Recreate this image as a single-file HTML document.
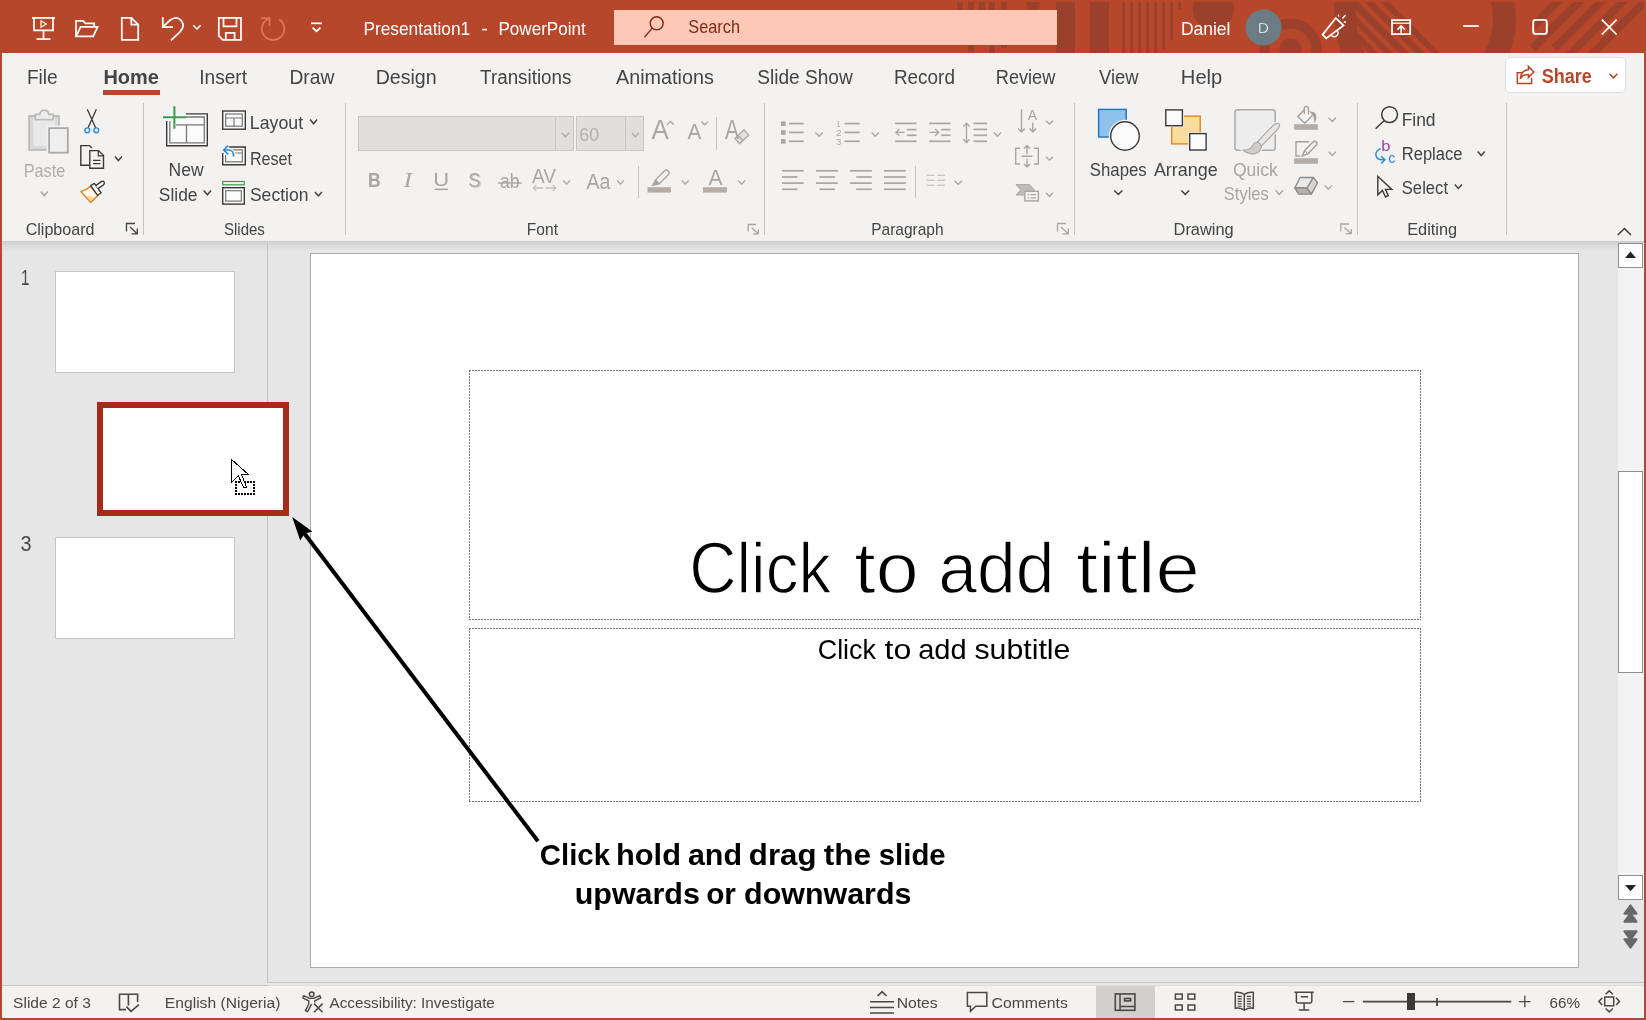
<!DOCTYPE html>
<html><head><meta charset="utf-8"><title>Presentation1 - PowerPoint</title>
<style>
html,body{margin:0;padding:0;background:#F3F2F1;overflow:hidden}
body{width:1646px;height:1020px;font-family:"Liberation Sans",sans-serif}
svg{display:block;position:absolute;left:0;top:0;will-change:transform}
text{font-family:"Liberation Sans",sans-serif;white-space:pre}
</style></head><body>
<svg width="1646" height="1020" viewBox="0 0 1646 1020">
<g shape-rendering="crispEdges">
<rect x="0" y="0" width="1646" height="1020" fill="#F3F2F1" />
<rect x="0" y="0" width="1646" height="53" fill="#B7472A" />
</g>
<defs><clipPath id="tbclip"><rect x="2" y="2" width="1642" height="51"/></clipPath><clipPath id="wedge"><path d="M1356 2 V10 Q1355.6 25 1358.5 38 Q1360.5 46 1365 53 H1480 V2 Z"/></clipPath><clipPath id="arcr"><rect x="1470" y="2" width="60" height="51"/></clipPath><linearGradient id="shadow" x1="0" y1="0" x2="0" y2="1"><stop offset="0" stop-color="#CDCDCD"/><stop offset="0.45" stop-color="#DADADA"/><stop offset="1" stop-color="#E6E6E6"/></linearGradient></defs>
<g clip-path="url(#tbclip)" fill="#9B402A">
<rect x="957" y="2" width="6" height="43"/>
<rect x="968" y="2" width="6" height="50"/>
<rect x="979" y="2" width="6" height="43"/>
<rect x="989" y="2" width="6" height="51"/>
<rect x="1001" y="2" width="6" height="46"/>
<polygon points="1026.6,2 1040,2 1034.5,44 1032,44"/>
<rect x="1056" y="2" width="19" height="51"/>
<rect x="1090" y="2" width="19" height="51"/>
<rect x="1122.2" y="2" width="3" height="51"/>
<rect x="1130.2" y="2" width="3" height="51"/>
<rect x="1138.2" y="2" width="3" height="51"/>
<rect x="1146.2" y="2" width="3" height="51"/>
<rect x="1154.2" y="2" width="3" height="51"/>
<rect x="1162.2" y="2" width="3" height="47.5"/>
<rect x="1170.2" y="2" width="3" height="37.5"/>
<rect x="1178.2" y="2" width="3" height="7"/>
<circle cx="1213.3" cy="8.8" r="20.8"/>
<circle cx="1290.5" cy="49.5" r="11"/>
<circle cx="1290.5" cy="49.5" r="26" fill="none" stroke="#9B402A" stroke-width="10"/>
<path d="M1333.8 2 H1357 L1356 4 V10 Q1355.6 25 1358.5 38 Q1360.5 46 1365 53 H1340.8 Q1333.5 28 1333.8 2Z"/>
<g clip-path="url(#wedge)">
<polygon points="1380.8,2 1388.8,2 1439.8,53 1431.8,53"/>
<polygon points="1364.9,2 1373.4,2 1424.4,53 1415.9,53"/>
<polygon points="1348,2 1358,2 1409,53 1399,53"/>
<polygon points="1333.5,2 1341.4,2 1392.4,53 1384.5,53"/>
<polygon points="1317.8,2 1327.2,2 1378.2,53 1368.8,53"/>
<polygon points="1303,2 1311.3,2 1362.3,53 1354,53"/>
</g>
<g clip-path="url(#arcr)"><circle cx="1428" cy="19" r="76.5" fill="none" stroke="#9B402A" stroke-width="23"/></g>
<line x1="1532.6" y1="26.7" x2="1569.2" y2="-10" stroke="#9B402A" stroke-width="7.8"/>
<line x1="1532.5" y1="48.4" x2="1590.9" y2="-10" stroke="#9B402A" stroke-width="7.8"/>
<line x1="1554.2" y1="48.4" x2="1612.7" y2="-10" stroke="#9B402A" stroke-width="7.8"/>
<line x1="1560" y1="64.4" x2="1634.4" y2="-10" stroke="#9B402A" stroke-width="7.8"/>
<line x1="1580" y1="66.1" x2="1656.1" y2="-10" stroke="#9B402A" stroke-width="7.8"/>
</g>
<g shape-rendering="crispEdges">
<rect x="0" y="0" width="2" height="1020" fill="#B7472A" />
<rect x="1644" y="0" width="2" height="1020" fill="#B7472A" />
<rect x="0" y="1018" width="1646" height="2" fill="#B7472A" />
</g>
<rect x="614" y="10" width="443" height="35" fill="#FDC9B6" shape-rendering="crispEdges"/>
<circle cx="656.7" cy="23.3" r="6.5" fill="none" stroke="#7E2B18" stroke-width="1.4"/><path d="M652.3 28.1 L644.4 37.3" stroke="#7E2B18" stroke-width="1.4" fill="none"/>
<circle cx="1263.5" cy="27.5" r="18" fill="#6C7C84"/>
<g fill="none" stroke="#FFFFFF" stroke-width="1.75">
<path d="M32 17.9 H55"/><path d="M34 18 V30.4 H53 V18"/><path d="M43.5 30.4 V39 M36.5 39.2 H50.5"/><path d="M41 20.8 L46.3 24 L41 27.2 Z" stroke-width="1.2"/>
<path d="M76 36.3 V20.8 H83 L85.5 23.3 H94.2 V26.8"/><path d="M76 36.3 L80.6 26.8 H97.6 L93.2 36.3 Z"/>
<path d="M121.8 17.8 H131.3 L138.2 24.7 V39.9 H121.8 Z"/><path d="M131.3 17.8 V24.7 H138.2"/>
<path d="M162.8 17.2 V27 H173"/><path d="M163.3 26.5 L170 20.3 Q176.5 15.5 181 20.3 Q185.8 26 180 31.8 L171 40.3" />
<path d="M193.3 25.3 L197 29 L200.7 25.3" stroke-width="1.5"/>
<path d="M218.8 17.8 H241 V39.9 H222.8 L218.8 35.9 Z"/><path d="M223.5 17.8 V26.4 H236.5 V17.8"/><path d="M225.8 39.9 V32.8 H234.6 V39.9"/>
<path d="M311 23.3 H322"/><path d="M312.6 27.6 L316.5 31.4 L320.4 27.6"/>
<path d="M1322.6 34.6 L1335.8 18 L1343.5 25.4 L1326.2 38.4 Z"/><path d="M1331 34.8 A3.6 3.6 0 0 0 1337.6 31" stroke-width="1.4"/><path d="M1338.2 14.8 L1338.9 16.6 M1342.3 18.6 L1345.6 15.3 M1343.8 22 L1346 22.2" stroke-width="1.4"/>
<rect x="1392" y="20.1" width="18.2" height="14" stroke-width="1.7"/><path d="M1392 23.2 H1410.2" stroke-width="1.3"/><path d="M1401.1 34 V26.2 M1397.4 29.6 L1401.1 25.9 L1404.8 29.6" stroke-width="1.5"/>
<path d="M1463.2 26 H1478.8" stroke-width="1.7"/>
<rect x="1533.2" y="19.9" width="13.6" height="14" rx="2.5" stroke-width="1.9"/>
<path d="M1601.8 19.7 L1616.6 34.5 M1616.6 19.7 L1601.8 34.5" stroke-width="1.7"/>
</g>
<g fill="none" stroke="#E9765D" stroke-width="1.6"><path d="M279.3 19.5 A11.2 11.2 0 1 1 269.5 18.2"/><path d="M261 18.2 H269.5 V25.5"/></g>
<rect x="103" y="90" width="57" height="5" fill="#B7472A" shape-rendering="crispEdges"/>
<rect x="1505.5" y="57.5" width="120" height="35" fill="#FFFFFF" stroke="#E1DFDD" stroke-width="1" rx="4.5" />
<g fill="none" stroke="#B7472A" stroke-width="1.5" stroke-linejoin="miter"><path d="M1522 72.8 H1517.3 V83.4 H1531.6 V78"/><path d="M1520.3 78.8 Q1521.2 70 1528.4 69.7 V66.4 L1533.9 72 L1528.4 77.4 V74.4 Q1523 74.2 1520.3 78.8Z"/></g>
<path d="M1609.4 73.7 L1613.4 77.8 L1617.4 73.7" fill="none" stroke="#B7472A" stroke-width="1.6"/>
<g shape-rendering="crispEdges">
<rect x="143" y="103" width="1" height="132" fill="#C6C4C2" />
<rect x="345" y="103" width="1" height="132" fill="#C6C4C2" />
<rect x="764" y="103" width="1" height="132" fill="#C6C4C2" />
<rect x="1074" y="103" width="1" height="132" fill="#C6C4C2" />
<rect x="1357" y="103" width="1" height="132" fill="#C6C4C2" />
<rect x="1506" y="103" width="1" height="132" fill="#C6C4C2" />
<rect x="716" y="117" width="1" height="33" fill="#C6C4C2" />
<rect x="638" y="166" width="1" height="32" fill="#C6C4C2" />
<rect x="915" y="166" width="1" height="32" fill="#C6C4C2" />
</g>
<rect x="29.2" y="116" width="29.6" height="33.8" fill="#E9E9E9" stroke="#BCBAB8" stroke-width="2"/>
<path d="M30.2 117 H33.5 V146 H58 V148.8 H30.2 Z" fill="#D9D9D9"/><path d="M55 117 H57.8 V128 H55 Z" fill="#D9D9D9"/>
<path d="M35.3 119.6 V114.3 H39.8 Q40.5 110.2 44.3 110.2 Q48.1 110.2 48.8 114.3 H53.2 V119.6 Z" fill="#EDEDED" stroke="#BCBAB8" stroke-width="1.8"/>
<rect x="46.6" y="125.6" width="23.6" height="29.6" fill="#F3F2F1"/>
<rect x="49.1" y="128.1" width="18.7" height="24.6" fill="#EEEEEE" stroke="#ABA9A7" stroke-width="1.8"/>
<path d="M40.9 191.5 L44.3 195.8 L47.7 191.5" fill="none" stroke="#A8A6A4" stroke-width="1.4"/>
<g fill="none" stroke-width="1.4"><path d="M87.3 109.3 L95.6 127.8 M96.4 109.3 L88.1 127.8" stroke="#3B3A39" stroke-width="1.3"/><circle cx="87.3" cy="130.3" r="2.4" stroke="#2B88D8"/><circle cx="96.3" cy="130.3" r="2.4" stroke="#2B88D8"/></g>
<g fill="none" stroke="#3B3A39" stroke-width="1.4"><path d="M89 165.3 H80.8 V145.6 H89.5 L92 148"/><path d="M89.8 150.6 H98.5 L103.5 155.6 V168.2 H89.8 Z" fill="#F3F2F1"/><path d="M98.3 150.8 V155.8 H103.3" stroke-width="1.2"/><path d="M93 160.3 H100.5 M93 163.6 H100.5" stroke-width="1.2"/></g>
<path d="M114.9 156.4 L118.4 160.5 L121.9 156.4" fill="none" stroke="#444444" stroke-width="1.5"/>
<g stroke-width="1.4" stroke-linejoin="round"><path d="M81 191.6 Q86 190.5 90.6 186.2 L98 195.6 L90.6 202.4 Z" fill="#FEF8EE" stroke="#E0780E"/><path d="M86.4 195.6 L95 197.8 L90.6 201.6 Z" fill="#FAD58A" stroke="none"/><path d="M90.7 185.6 L94.3 183.4 L101.2 192.8 L97.6 195.3 Z" fill="#FFFFFF" stroke="#3B3A39"/><path d="M95.8 185.6 L101.6 181.4 Q103.4 180.6 104.2 182.2 Q104.8 183.8 103.4 184.8 L97.8 188.6" fill="#FFFFFF" stroke="#3B3A39"/></g>
<path d="M126.5 231.5 V223.5 H135" fill="none" stroke="#444444" stroke-width="1.3"/>
<path d="M130 227 L137 233.5 M137.3 228.5 V233.8 H131.5" fill="none" stroke="#444444" stroke-width="1.3"/>
<rect x="167.4" y="114.6" width="39.2" height="30.5" fill="#FAFAFA"/>
<g fill="none" stroke="#3B3A39" stroke-width="1.4"><path d="M186 113.9 H207.3 V145.8 H166.7 V121"/></g>
<g fill="none" stroke="#797775" stroke-width="1.3"><path d="M186 117 H204.3 V142.8 H169.8 V121"/><path d="M176 124.8 H204.3 M186.5 124.8 V142.8"/></g>
<path d="M163 117.3 H186 M174.4 106.2 V128.8" stroke="#3C9A52" stroke-width="2" fill="none"/>
<path d="M203.7 190.5 L207.35 194.8 L211.0 190.5" fill="none" stroke="#444444" stroke-width="1.5"/>
<g fill="#FAFAFA"><rect x="222.7" y="111" width="22.6" height="18.2" stroke="#3B3A39" stroke-width="1.4"/><rect x="225.7" y="114" width="16.6" height="12.2" stroke="#797775" stroke-width="1.2"/><path d="M225.7 118 H242.3 M234 118 V126.2" stroke="#797775" stroke-width="1.2"/></g>
<path d="M310.1 119.5 L313.6 123.8 L317.1 119.5" fill="none" stroke="#444444" stroke-width="1.5"/>
<rect x="223.4" y="147.4" width="21.4" height="17" fill="#FAFAFA"/>
<g fill="none"><path d="M228 147 H245.3 V164.7 H222.7 V153" stroke="#3B3A39" stroke-width="1.4"/><path d="M232 149.9 H242.4 V161.9 H225.6 V155 M235.5 153 H242" stroke="#797775" stroke-width="1.2"/><path d="M228.3 145.6 L223.6 150 L228.3 154.4 M223.8 150 H228.5 Q233.8 150 233.5 156.5" stroke="#F3F2F1" stroke-width="4"/><path d="M228.3 145.6 L223.6 150 L228.3 154.4 M223.8 150 H228.5 Q233.8 150 233.5 156.5" stroke="#2B88D8" stroke-width="1.5"/></g>
<g fill="none"><rect x="222.8" y="181.5" width="21.4" height="3.3" stroke="#3C9A52" stroke-width="1.2"/><rect x="222.7" y="187.7" width="21.6" height="16.4" fill="#FAFAFA" stroke="#3B3A39" stroke-width="1.4"/><rect x="225.7" y="190.7" width="15.6" height="10.4" stroke="#797775" stroke-width="1.2"/></g>
<path d="M314.9 192.0 L318.4 195.8 L321.9 192.0" fill="none" stroke="#444444" stroke-width="1.5"/>
<g shape-rendering="crispEdges">
<rect x="358.5" y="116.5" width="215" height="34" fill="#E1DFDD" stroke="#C8C6C4" stroke-width="1" />
<rect x="555" y="117" width="1" height="33" fill="#C8C6C4" />
<rect x="576.5" y="116.5" width="67" height="34" fill="#E1DFDD" stroke="#C8C6C4" stroke-width="1" />
<rect x="625" y="117" width="1" height="33" fill="#C8C6C4" />
</g>
<path d="M561.9 132.9 L565.4 136.7 L568.9 132.9" fill="none" stroke="#A8A6A4" stroke-width="1.3"/>
<path d="M631.9 132.9 L635.45 136.7 L639.0 132.9" fill="none" stroke="#A8A6A4" stroke-width="1.3"/>
<path d="M667 124.8 L670.4 121.5 L673.8 124.8" fill="none" stroke="#A8A6A4" stroke-width="1.3"/>
<path d="M701.3 121.5 L704.7 124.8 L708.1 121.5" fill="none" stroke="#A8A6A4" stroke-width="1.3"/>
<path d="M744.1 129.8 L748.7 135.2 L739.5 143.7 L734.9 138.5 Z" fill="#E4E2E0" stroke="#F3F2F1" stroke-width="3.4"/><path d="M744.1 129.8 L748.7 135.2 L739.5 143.7 L734.9 138.5 Z M738.2 135.4 L742.8 140.7" fill="#E4E2E0" stroke="#A8A6A4" stroke-width="1.3"/>
<rect x="434.5" y="188.6" width="13.5" height="1.5" fill="#A8A6A4" />
<rect x="498" y="182.3" width="23.8" height="1.4" fill="#A8A6A4" />
<path d="M533 188 H543.3 M536.3 184.9 L533.2 188 L536.3 191.1 M545.7 188 H556 M552.7 184.9 L555.8 188 L552.7 191.1" fill="none" stroke="#C2C0BE" stroke-width="1.3"/>
<path d="M563.2 180.5 L566.6 184.1 L570.0 180.5" fill="none" stroke="#A8A6A4" stroke-width="1.3"/>
<path d="M617.2 180.5 L620.45 184.1 L623.7 180.5" fill="none" stroke="#A8A6A4" stroke-width="1.3"/>
<g fill="none" stroke="#A8A6A4" stroke-width="1.4"><path d="M655.5 180 L664.5 170.8 Q666.5 169.2 668.3 171 Q670 173 668.3 174.8 L659.3 183.8 Z"/><path d="M655.5 180 L652.8 185.2 L659.3 183.8" fill="#A8A6A4"/></g>
<rect x="647.5" y="187.2" width="23.5" height="5.4" fill="#B3ADA9" />
<path d="M681.9 180.5 L685.2 184.1 L688.5 180.5" fill="none" stroke="#A8A6A4" stroke-width="1.3"/>
<rect x="703" y="187.2" width="24" height="5.4" fill="#B3ADA9" />
<path d="M738.1 180.5 L741.6 184.1 L745.1 180.5" fill="none" stroke="#A8A6A4" stroke-width="1.3"/>
<path d="M748.2 231.6 V224.5 H756" fill="none" stroke="#A8A6A4" stroke-width="1.3"/>
<path d="M751.7 228 L758 233.6 M758.3 229.5 V233.9 H753.2" fill="none" stroke="#A8A6A4" stroke-width="1.3"/>
<rect x="781" y="121.39999999999999" width="4.6" height="4.6" fill="#A8A6A4" />
<path d="M789 123.6 H803.7" stroke="#A8A6A4" stroke-width="1.7" fill="none"/>
<rect x="781" y="130.20000000000002" width="4.6" height="4.6" fill="#A8A6A4" />
<path d="M789 132.4 H803.7" stroke="#A8A6A4" stroke-width="1.7" fill="none"/>
<rect x="781" y="139.10000000000002" width="4.6" height="4.6" fill="#A8A6A4" />
<path d="M789 141.3 H803.7" stroke="#A8A6A4" stroke-width="1.7" fill="none"/>
<path d="M815.5 132.5 L819.1 136.3 L822.7 132.5" fill="none" stroke="#A8A6A4" stroke-width="1.3"/>
<path d="M844.5 123.6 H859.7" stroke="#A8A6A4" stroke-width="1.7" fill="none"/>
<path d="M844.5 132.4 H859.7" stroke="#A8A6A4" stroke-width="1.7" fill="none"/>
<path d="M844.5 141.3 H859.7" stroke="#A8A6A4" stroke-width="1.7" fill="none"/>
<path d="M871.7 132.5 L875.2 136.3 L878.7 132.5" fill="none" stroke="#A8A6A4" stroke-width="1.3"/>
<path d="M895.1 123.4 H916.5" stroke="#A8A6A4" stroke-width="1.7" fill="none"/>
<path d="M895.1 141.3 H916.5" stroke="#A8A6A4" stroke-width="1.7" fill="none"/>
<path d="M906.8 129.6 H916.5" stroke="#A8A6A4" stroke-width="1.7" fill="none"/>
<path d="M906.8 135.3 H916.5" stroke="#A8A6A4" stroke-width="1.7" fill="none"/>
<path d="M896 132.4 H904.5 M899.3 129 L895.9 132.4 L899.3 135.8" fill="none" stroke="#A8A6A4" stroke-width="1.3"/>
<path d="M929.1 123.4 H950.5" stroke="#A8A6A4" stroke-width="1.7" fill="none"/>
<path d="M929.1 141.3 H950.5" stroke="#A8A6A4" stroke-width="1.7" fill="none"/>
<path d="M941.3 129.6 H950.5" stroke="#A8A6A4" stroke-width="1.7" fill="none"/>
<path d="M941.3 135.3 H950.5" stroke="#A8A6A4" stroke-width="1.7" fill="none"/>
<path d="M929.5 132.4 H938.5 M935.2 129 L938.6 132.4 L935.2 135.8" fill="none" stroke="#A8A6A4" stroke-width="1.3"/>
<path d="M973.5 123.4 H987" stroke="#A8A6A4" stroke-width="1.7" fill="none"/>
<path d="M973.5 129.4 H987" stroke="#A8A6A4" stroke-width="1.7" fill="none"/>
<path d="M973.5 135.3 H987" stroke="#A8A6A4" stroke-width="1.7" fill="none"/>
<path d="M973.5 141.3 H987" stroke="#A8A6A4" stroke-width="1.7" fill="none"/>
<path d="M966.5 123.5 V142.3 M963.3 126.6 L966.5 123.3 L969.7 126.6 M963.3 139.2 L966.5 142.5 L969.7 139.2" fill="none" stroke="#A8A6A4" stroke-width="1.3"/>
<path d="M993.8 132.5 L997.3499999999999 136.3 L1000.9 132.5" fill="none" stroke="#A8A6A4" stroke-width="1.3"/>
<path d="M1021.5 109.3 V132 M1018.2 128.6 L1021.5 132 L1024.8 128.6 M1032.8 122.5 V132 M1029.6 128.6 L1032.8 132 L1036 128.6" fill="none" stroke="#A8A6A4" stroke-width="1.4"/>
<path d="M1045.9 120.8 L1049.45 124.1 L1053.0 120.8" fill="none" stroke="#A8A6A4" stroke-width="1.3"/>
<path d="M1020 148.3 H1015.7 V164 H1020 M1034 148.3 H1038.3 V164 H1034 M1021.5 156.2 H1032.5 M1027 145.6 V154 M1024 148.5 L1027 145.5 L1030 148.5 M1027 158.5 V167 M1024 164 L1027 167 L1030 164" fill="none" stroke="#A8A6A4" stroke-width="1.4"/>
<path d="M1045.9 156.8 L1049.45 160.2 L1053.0 156.8" fill="none" stroke="#A8A6A4" stroke-width="1.3"/>
<path d="M1016 184.6 H1029.5 L1034.3 189.8 L1029.5 195 H1016 L1020.8 189.8 Z" fill="#BEBCBA" stroke="#A8A6A4" stroke-width="1"/>
<rect x="1024.8" y="191.3" width="13.6" height="9.6" fill="#F3F2F1" stroke="#A8A6A4" stroke-width="1.4"/><path d="M1027.5 194.7 H1029 M1030.5 194.7 H1036 M1027.5 197.8 H1029 M1030.5 197.8 H1036" stroke="#A8A6A4" stroke-width="1.2" fill="none"/>
<path d="M1045.9 192.7 L1049.45 196.5 L1053.0 192.7" fill="none" stroke="#A8A6A4" stroke-width="1.3"/>
<path d="M782 170.8 H803.7" stroke="#A8A6A4" stroke-width="1.7" fill="none"/>
<path d="M782 177 H797.5" stroke="#A8A6A4" stroke-width="1.7" fill="none"/>
<path d="M782 183.1 H803.7" stroke="#A8A6A4" stroke-width="1.7" fill="none"/>
<path d="M782 189.3 H797.5" stroke="#A8A6A4" stroke-width="1.7" fill="none"/>
<path d="M816 170.8 H837.8" stroke="#A8A6A4" stroke-width="1.7" fill="none"/>
<path d="M819.3 177 H834.9" stroke="#A8A6A4" stroke-width="1.7" fill="none"/>
<path d="M816 183.1 H837.8" stroke="#A8A6A4" stroke-width="1.7" fill="none"/>
<path d="M819.3 189.3 H834.9" stroke="#A8A6A4" stroke-width="1.7" fill="none"/>
<path d="M850 170.8 H871.8" stroke="#A8A6A4" stroke-width="1.7" fill="none"/>
<path d="M856.2 177 H871.8" stroke="#A8A6A4" stroke-width="1.7" fill="none"/>
<path d="M850 183.1 H871.8" stroke="#A8A6A4" stroke-width="1.7" fill="none"/>
<path d="M856.2 189.3 H871.8" stroke="#A8A6A4" stroke-width="1.7" fill="none"/>
<path d="M884 170.8 H905.8" stroke="#A8A6A4" stroke-width="1.7" fill="none"/>
<path d="M884 177 H905.8" stroke="#A8A6A4" stroke-width="1.7" fill="none"/>
<path d="M884 183.1 H905.8" stroke="#A8A6A4" stroke-width="1.7" fill="none"/>
<path d="M884 189.3 H905.8" stroke="#A8A6A4" stroke-width="1.7" fill="none"/>
<path d="M926.8 175.3 H934.5" stroke="#C8C6C4" stroke-width="1.3" fill="none"/>
<path d="M937.3 175.3 H945" stroke="#C8C6C4" stroke-width="1.3" fill="none"/>
<path d="M926.8 180.3 H934.5" stroke="#C8C6C4" stroke-width="1.3" fill="none"/>
<path d="M937.3 180.3 H945" stroke="#C8C6C4" stroke-width="1.3" fill="none"/>
<path d="M926.8 185.3 H934.5" stroke="#C8C6C4" stroke-width="1.3" fill="none"/>
<path d="M937.3 185.3 H945" stroke="#C8C6C4" stroke-width="1.3" fill="none"/>
<path d="M954.5 180.7 L958.3 184.3 L962.1 180.7" fill="none" stroke="#A8A6A4" stroke-width="1.3"/>
<path d="M1057.5 231.6 V223.5 H1066" fill="none" stroke="#A8A6A4" stroke-width="1.3"/>
<path d="M1061 227 L1068 233.6 M1068.3 228.5 V233.9 H1062.5" fill="none" stroke="#A8A6A4" stroke-width="1.3"/>
<rect x="1098.6" y="109.4" width="27.6" height="27.6" fill="#8DC2EC" stroke="#1E71C4" stroke-width="1.4"/>
<circle cx="1125" cy="136" r="16.2" fill="#F3F2F1"/><circle cx="1125" cy="136" r="14.3" fill="#FAFAFA" stroke="#3B3A39" stroke-width="1.4"/>
<path d="M1114.2 190.5 L1118.3000000000002 194.4 L1122.4 190.5" fill="none" stroke="#444444" stroke-width="1.5"/>
<rect x="1171.7" y="116.1" width="28.5" height="27.8" fill="#F9DC9B" stroke="#E0861A" stroke-width="1.4"/>
<rect x="1164.5" y="108.5" width="19.6" height="18.6" fill="#F3F2F1"/><rect x="1165.8" y="109.9" width="16.6" height="15.8" fill="#FAFAFA" stroke="#3B3A39" stroke-width="1.4"/>
<rect x="1188.2" y="132.2" width="19.6" height="19.4" fill="#F3F2F1"/><rect x="1189.7" y="133.6" width="16.4" height="16.4" fill="#FAFAFA" stroke="#3B3A39" stroke-width="1.4"/>
<path d="M1181.3 190.5 L1185.25 194.4 L1189.2 190.5" fill="none" stroke="#444444" stroke-width="1.5"/>
<rect x="1235" y="109.7" width="40.2" height="40.6" rx="2.5" fill="#EDEDED" stroke="#ABA9A7" stroke-width="1.5"/>
<path d="M1279.3 124.2 Q1277 121.8 1272 126.5 L1257.5 141.8 L1261.5 145.8 L1276 131 Q1280.8 126 1279.3 124.2Z" fill="#E9E7E5" stroke="#F3F2F1" stroke-width="3.5"/><path d="M1243 150 Q1250 150.5 1252.3 145.8 Q1254.5 141.3 1258 142.5 Q1262.5 144.5 1260.8 149 Q1258 154.5 1251 153.8 Q1246.5 153.3 1243 150Z" fill="#CFCDCB" stroke="#F3F2F1" stroke-width="3.5"/>
<path d="M1279.3 124.2 Q1277 121.8 1272 126.5 L1257.5 141.8 L1261.5 145.8 L1276 131 Q1280.8 126 1279.3 124.2Z" fill="#E9E7E5" stroke="#ABA9A7" stroke-width="1.2"/><path d="M1243 150 Q1250 150.5 1252.3 145.8 Q1254.5 141.3 1258 142.5 Q1262.5 144.5 1260.8 149 Q1258 154.5 1251 153.8 Q1246.5 153.3 1243 150Z" fill="#CFCDCB" stroke="#ABA9A7" stroke-width="1.2"/>
<path d="M1275.5 190.3 L1279.3 194.4 L1283.1 190.3" fill="none" stroke="#A8A6A4" stroke-width="1.4"/>
<g fill="none" stroke="#A3A19F" stroke-width="1.4"><path d="M1304.3 109.8 L1297.8 116.5 L1304.8 123.2 L1312.3 115.6"/><path d="M1304.3 114 V108.2 Q1304.6 106.3 1306.5 106.4 Q1308.4 106.5 1308.5 108.5 V114.4"/><path d="M1311 112.3 Q1315.6 112.6 1315.6 116.5 Q1315.8 119 1315 120.8 Q1314.5 115.5 1311 112.3Z" fill="#A3A19F"/></g>
<rect x="1294.2" y="124.2" width="23.7" height="5.6" fill="#B3ADA9" />
<path d="M1328.7 117.8 L1332.35 121.5 L1336.0 117.8" fill="none" stroke="#A8A6A4" stroke-width="1.3"/>
<g fill="none" stroke="#A3A19F" stroke-width="1.4"><path d="M1309.2 141.8 H1296 V156 H1300.2"/><path d="M1304.6 150.6 L1313 142 Q1314.6 140.4 1316.3 142 Q1317.8 143.6 1316.3 145.3 L1307.8 153.8 L1302.2 155.9 Z"/><path d="M1304.6 150.6 L1307.8 153.8" stroke-width="1"/></g>
<rect x="1294.2" y="158.2" width="23.7" height="5.6" fill="#B3ADA9" />
<path d="M1328.7 151.8 L1332.35 155.5 L1336.0 151.8" fill="none" stroke="#A8A6A4" stroke-width="1.3"/>
<g stroke="#8E8C8A" stroke-width="1.4" stroke-linejoin="round"><path d="M1300.1 177.5 H1313.3 L1307.1 188 H1294.8 Z" fill="#E9E9E9"/><path d="M1294.8 188 H1307.1 L1311.4 194.1 H1298.7 Z" fill="#B5B3B1"/><path d="M1313.3 177.5 L1317.5 182.8 L1311.4 194.1 L1307.1 188 Z" fill="#D8D6D4"/></g>
<path d="M1324.7 185.4 L1328.3000000000002 189.3 L1331.9 185.4" fill="none" stroke="#A8A6A4" stroke-width="1.3"/>
<path d="M1340.8 231.4 V224.0 H1349" fill="none" stroke="#A8A6A4" stroke-width="1.3"/>
<path d="M1344.3 227.5 L1351 233.4 M1351.3 229.0 V233.70000000000002 H1345.8" fill="none" stroke="#A8A6A4" stroke-width="1.3"/>
<g fill="none" stroke="#3B3A39" stroke-width="1.5"><circle cx="1389.6" cy="114.6" r="7.9"/><path d="M1384.3 120.5 L1375.6 128.7"/></g>
<path d="M1380.5 148.3 Q1373.5 152.5 1376.8 157.5 Q1378.5 160 1384.5 159.8 M1381.2 156.2 L1385 159.8 L1381.2 163.4" fill="none" stroke="#2B88D8" stroke-width="1.4"/>
<path d="M1477.8 151.6 L1481.25 155.6 L1484.7 151.6" fill="none" stroke="#444444" stroke-width="1.5"/>
<path d="M1377.8 176.3 V194.8 L1382.5 190.5 L1385.5 197 L1388.3 195.7 L1385.4 189.4 L1391.8 189.4 Z" fill="none" stroke="#3B3A39" stroke-width="1.4" stroke-linejoin="miter"/>
<path d="M1454.8 184.5 L1458.35 188.4 L1461.9 184.5" fill="none" stroke="#444444" stroke-width="1.5"/>
<path d="M1617.8 235 L1624.4 228.5 L1631 235" fill="none" stroke="#3B3A39" stroke-width="1.5"/>
<g shape-rendering="crispEdges">
<rect x="2" y="241" width="1642" height="745" fill="#E6E6E6" />
<rect x="2" y="241" width="1642" height="10" fill="url(#shadow)" />
<rect x="267" y="243" width="1" height="740" fill="#C3C3C3" />
<rect x="55.5" y="271.5" width="179" height="101" fill="#FFFFFF" stroke="#C8C6C4" stroke-width="1" />
<rect x="55.5" y="537.5" width="179" height="101" fill="#FFFFFF" stroke="#C8C6C4" stroke-width="1" />
<rect x="310.5" y="253.5" width="1268" height="714" fill="#FFFFFF" stroke="#ABABAB" stroke-width="1" />
<rect x="1618" y="243" width="26" height="742" fill="#F3F3F3" />
<rect x="1618.5" y="243.5" width="24" height="24" fill="#FFFFFF" stroke="#8E8E8E" stroke-width="1" />
<rect x="1618.5" y="471.5" width="24" height="201" fill="#FFFFFF" stroke="#8E8E8E" stroke-width="1" />
<rect x="1618.5" y="875.5" width="24" height="24" fill="#FFFFFF" stroke="#8E8E8E" stroke-width="1" />
<rect x="1618" y="900" width="26" height="85" fill="#E6E6E6" />
<rect x="2" y="985" width="266" height="1" fill="#C6C6C6" />
<rect x="268" y="982" width="1376" height="1" fill="#C6C6C6" />
<rect x="268" y="983" width="1376" height="2" fill="#E9E9E9" />
<rect x="268" y="985" width="1376" height="1" fill="#DCDCDC" />
</g>
<path d="M1625 258 L1630.5 251.6 L1636 258 Z" fill="#222"/>
<path d="M1625 885 L1636 885 L1630.5 891.3 Z" fill="#222"/>
<g fill="#686868" stroke="#686868" stroke-width="2.4" stroke-linejoin="round"><path d="M1624.6 913.6 L1630.5 905.6 L1636.4 913.6 Z"/><path d="M1624.6 921.6 L1630.5 913.6 L1636.4 921.6 Z"/><path d="M1624.6 931.4 L1636.4 931.4 L1630.5 939.4 Z"/><path d="M1624.6 939.4 L1636.4 939.4 L1630.5 947.4 Z"/></g>
<g fill="none" stroke="#767676" stroke-width="1" stroke-dasharray="2 1" shape-rendering="crispEdges"><path d="M469 370.5 H1421 M469 619.5 H1421 M469.5 370 V620 M1420.5 370 V620 M469 628.5 H1421 M469 801.5 H1421 M469.5 628 V802 M1420.5 628 V802"/></g>
<rect x="1096" y="986" width="59" height="32" fill="#D2D0CE" shape-rendering="crispEdges"/>
<g fill="none" stroke="#4A4846" stroke-width="1.4">
<path d="M128.4 994.2 V1005.5 M126 1009.6 H119.5 V994.2 H137.6 V1002" stroke-width="1.6"/><path d="M126.4 1006.6 L131 1011.4 L138.9 1004.6" stroke-width="1.6"/>
<circle cx="311.7" cy="994.2" r="2.3" stroke-width="1.5"/><path d="M303.6 995.6 L309.8 998.4 H313.6 L319.8 995.6 L320.8 997.8 L314.8 1000.8 V1002.6 M303.6 995.6 L302.8 997.8 L308.8 1000.8 V1004 L305.4 1010.6 L307.6 1011.6 L311.6 1004.2" stroke-width="1.4" stroke-linejoin="round"/><path d="M314 1003.6 L322.6 1012.2 M322.6 1003.6 L314 1012.2" stroke-width="1.5"/>
<path d="M870 1001.7 H894 M870 1007.4 H894 M870 1013.1 H894" stroke-width="1.5"/><path d="M877.6 996 L882.1 991.6 L886.6 996" stroke-width="1.7"/>
<path d="M967.4 992.4 H986.8 V1006.3 H975.8 L970.5 1011.2 V1006.3 H967.4 Z" stroke-width="1.5"/>
<rect x="1115.3" y="993.9" width="19.6" height="16.4" stroke-width="1.6"/><path d="M1120 994 V1010 M1120 1006.5 H1135" stroke-width="1.5"/><rect x="1124.6" y="998.5" width="6" height="2.4" stroke-width="1.6"/>
<rect x="1175.4" y="994.1" width="6.8" height="5" stroke-width="1.5"/><rect x="1188" y="994.1" width="6.8" height="5" stroke-width="1.5"/><rect x="1175.4" y="1005" width="6.8" height="5" stroke-width="1.5"/><rect x="1188" y="1005" width="6.8" height="5" stroke-width="1.5"/>
<path d="M1244.3 994.3 V1010.2 M1244.3 994.3 Q1240 991.6 1235.3 992.3 V1008.3 Q1240 1007.5 1244.3 1010.2 Q1248.6 1007.5 1253.3 1008.3 V992.3 Q1248.6 991.6 1244.3 994.3" stroke-width="1.5"/><path d="M1237.6 996.4 H1241.8 M1237.6 998.9 H1241.8 M1237.6 1001.4 H1241.8 M1237.6 1003.9 H1241.8 M1237.6 1006.2 H1241.8 M1246.8 996.4 H1251 M1246.8 998.9 H1251 M1246.8 1001.4 H1251 M1246.8 1003.9 H1251 M1246.8 1006.2 H1251" stroke-width="1.1"/>
<path d="M1294.4 992.2 H1313.8 M1296.4 992.2 V1001.5 Q1296.4 1002.9 1297.8 1002.9 H1310.4 Q1311.8 1002.9 1311.8 1001.5 V992.2 M1304.1 1002.9 V1009.8 M1298.8 1009.9 H1309.3 M1300.8 996.8 H1308" stroke-width="1.5"/>
<path d="M1343 1001.6 H1354.3" stroke-width="1.3"/><path d="M1363 1001.7 H1511.3" stroke-width="1.8"/><path d="M1437 998 V1006" stroke-width="1.8"/><path d="M1519 1001.6 H1530.5 M1524.8 995.8 V1007.2" stroke-width="1.3"/>
<rect x="1604.7" y="997" width="9" height="8.8" stroke-width="1.5"/><path d="M1605.6 994.3 L1609.2 990.9 L1612.8 994.3 M1605.6 1008.5 L1609.2 1011.9 L1612.8 1008.5 M1602.3 997.8 L1598.9 1001.4 L1602.3 1005 M1616.1 997.8 L1619.5 1001.4 L1616.1 1005" stroke-width="1.5"/>
</g>
<rect x="1407" y="993" width="8" height="17" fill="#3B3A39" shape-rendering="crispEdges"/>
<text transform="translate(688.30 33.40) scale(0.8774 1)" font-size="18.6" fill="#7E2B18" >Search</text>
<text transform="translate(363.42 34.70) scale(0.9515 1)" font-size="18.2" fill="#FFFFFF" >Presentation1</text>
<text transform="translate(481.33 34.70) scale(1.0889 1)" font-size="18.2" fill="#FFFFFF" >-</text>
<text transform="translate(498.44 34.70) scale(0.9387 1)" font-size="18.2" fill="#FFFFFF" >PowerPoint</text>
<text transform="translate(1180.96 34.70) scale(0.9582 1)" font-size="18.2" fill="#FFFFFF" >Daniel</text>
<text transform="translate(1257.76 33.00) scale(1.0333 1)" font-size="15" fill="#FFFFFF" stroke="#6C7C84" stroke-width="0.4">D</text>
<text transform="translate(26.94 83.75) scale(0.9766 1)" font-size="19.6" fill="#444444" >File</text>
<text transform="translate(103.43 83.75) scale(1.0180 1)" font-size="19.6" fill="#444444" font-weight="700" >Home</text>
<text transform="translate(199.24 83.75) scale(0.9751 1)" font-size="19.6" fill="#444444" >Insert</text>
<text transform="translate(289.43 83.75) scale(0.9823 1)" font-size="19.6" fill="#444444" >Draw</text>
<text transform="translate(375.65 83.75) scale(1.0007 1)" font-size="19.6" fill="#444444" >Design</text>
<text transform="translate(480.12 83.75) scale(0.9598 1)" font-size="19.6" fill="#444444" >Transitions</text>
<text transform="translate(616.00 83.75) scale(1.0103 1)" font-size="19.6" fill="#444444" >Animations</text>
<text transform="translate(757.22 83.75) scale(0.9753 1)" font-size="19.6" fill="#444444" >Slide Show</text>
<text transform="translate(893.96 83.75) scale(0.9647 1)" font-size="19.6" fill="#444444" >Record</text>
<text transform="translate(995.77 83.75) scale(0.9274 1)" font-size="19.6" fill="#444444" >Review</text>
<text transform="translate(1099.00 83.75) scale(0.9403 1)" font-size="19.6" fill="#444444" >View</text>
<text transform="translate(1180.85 83.75) scale(1.0288 1)" font-size="19.6" fill="#444444" >Help</text>
<text transform="translate(1541.65 83.10) scale(0.8944 1)" font-size="20.2" fill="#B7472A" font-weight="700" >Share</text>
<text transform="translate(23.73 177.00) scale(0.9040 1)" font-size="18" fill="#B0AEAC" >Paste</text>
<text transform="translate(25.69 234.80) scale(1.0176 1)" font-size="15.8" fill="#444444" >Clipboard</text>
<text transform="translate(168.54 176.20) scale(0.9738 1)" font-size="18" fill="#444444" >New</text>
<text transform="translate(158.83 200.50) scale(0.9659 1)" font-size="18" fill="#444444" >Slide</text>
<text transform="translate(249.82 129.20) scale(0.9859 1)" font-size="18" fill="#444444" >Layout</text>
<text transform="translate(249.95 164.90) scale(0.8963 1)" font-size="18" fill="#444444" >Reset</text>
<text transform="translate(249.92 201.20) scale(0.9754 1)" font-size="18" fill="#444444" >Section</text>
<text transform="translate(224.04 234.80) scale(0.9490 1)" font-size="15.8" fill="#444444" >Slides</text>
<text transform="translate(579.31 141.00) scale(0.9886 1)" font-size="18" fill="#B3B0AD" >60</text>
<text transform="translate(651.50 139.30) scale(0.9249 1)" font-size="28" fill="#A8A6A4" >A</text>
<text transform="translate(687.60 139.10) scale(0.9456 1)" font-size="22" fill="#A8A6A4" >A</text>
<text transform="translate(725.00 139.30) scale(0.7548 1)" font-size="28" fill="#A8A6A4" >A</text>
<text transform="translate(367.89 186.70) scale(0.8504 1)" font-size="20.6" fill="#A8A6A4" font-weight="700" >B</text>
<text transform="translate(403.52 186.70) scale(1.2099 1)" font-size="21.5" fill="#A8A6A4" font-style="italic" style="font-family:&quot;Liberation Serif&quot;" >I</text>
<text transform="translate(433.28 185.50) scale(1.1560 1)" font-size="19" fill="#A8A6A4" >U</text>
<text transform="translate(469.51 188.00) scale(0.8770 1)" font-size="21" fill="#D2D0CE" >S</text>
<text transform="translate(468.31 186.70) scale(0.8770 1)" font-size="21" fill="#A8A6A4" >S</text>
<text transform="translate(499.98 188.00) scale(0.8985 1)" font-size="19.5" fill="#A8A6A4" >ab</text>
<text transform="translate(532.00 183.20) scale(0.9541 1)" font-size="20" fill="#A8A6A4" >AV</text>
<text transform="translate(586.50 188.60) scale(0.8935 1)" font-size="22" fill="#A8A6A4" >Aa</text>
<text transform="translate(708.40 184.60) scale(0.9790 1)" font-size="21.5" fill="#A8A6A4" >A</text>
<text transform="translate(526.82 234.80) scale(0.9860 1)" font-size="15.8" fill="#444444" >Font</text>
<text transform="translate(836.84 126.50) scale(0.7632 1)" font-size="8.5" fill="#A8A6A4" >1</text>
<text transform="translate(835.93 135.60) scale(1.1795 1)" font-size="8.5" fill="#A8A6A4" >2</text>
<text transform="translate(836.06 144.60) scale(1.1220 1)" font-size="8.5" fill="#A8A6A4" >3</text>
<text transform="translate(1027.80 120.30) scale(0.9691 1)" font-size="14.5" fill="#A8A6A4" >A</text>
<text transform="translate(871.22 234.80) scale(0.9819 1)" font-size="15.8" fill="#444444" >Paragraph</text>
<text transform="translate(1089.85 175.70) scale(0.9321 1)" font-size="18" fill="#444444" >Shapes</text>
<text transform="translate(1153.90 175.70) scale(0.9980 1)" font-size="18" fill="#444444" >Arrange</text>
<text transform="translate(1232.92 175.70) scale(0.9733 1)" font-size="18" fill="#A8A6A4" >Quick</text>
<text transform="translate(1223.76 200.30) scale(0.9198 1)" font-size="18" fill="#A8A6A4" >Styles</text>
<text transform="translate(1173.55 234.80) scale(1.0383 1)" font-size="15.8" fill="#444444" >Drawing</text>
<text transform="translate(1401.64 126.40) scale(0.9691 1)" font-size="18" fill="#444444" >Find</text>
<text transform="translate(1381.18 151.30) scale(1.1364 1)" font-size="14.5" fill="#A33FB5" >b</text>
<text transform="translate(1388.21 162.80) scale(0.9841 1)" font-size="14.5" fill="#2B88D8" >c</text>
<text transform="translate(1401.71 160.20) scale(0.9213 1)" font-size="18" fill="#444444" >Replace</text>
<text transform="translate(1401.76 194.00) scale(0.9262 1)" font-size="18" fill="#444444" >Select</text>
<text transform="translate(1407.16 234.80) scale(1.0342 1)" font-size="15.8" fill="#444444" >Editing</text>
<text transform="translate(21.06 285.00) scale(0.6735 1)" font-size="22.6" fill="#484848" >1</text>
<text transform="translate(20.40 551.00) scale(0.8796 1)" font-size="22.6" fill="#484848" >3</text>
<text transform="translate(689.23 592.80) scale(0.8975 1)" font-size="73" fill="#000000" stroke="#FFFFFF" stroke-width="1.3">Click</text>
<text transform="translate(854.20 592.80) scale(1.0566 1)" font-size="73" fill="#000000" stroke="#FFFFFF" stroke-width="1.3">to</text>
<text transform="translate(938.22 592.80) scale(0.9539 1)" font-size="73" fill="#000000" stroke="#FFFFFF" stroke-width="1.3">add</text>
<text transform="translate(1075.90 592.80) scale(1.0909 1)" font-size="73" fill="#000000" stroke="#FFFFFF" stroke-width="1.3">title</text>
<text transform="translate(817.74 658.60) scale(0.9601 1)" font-size="28" fill="#000000" >Click</text>
<text transform="translate(884.60 658.60) scale(1.1478 1)" font-size="28" fill="#000000" >to</text>
<text transform="translate(918.19 658.60) scale(1.0368 1)" font-size="28" fill="#000000" >add</text>
<text transform="translate(974.43 658.60) scale(1.0821 1)" font-size="28" fill="#000000" >subtitle</text>
<text transform="translate(539.78 864.60) scale(1.0132 1)" font-size="29" fill="#000000" font-weight="700" >Click</text>
<text transform="translate(615.98 864.60) scale(1.0620 1)" font-size="29" fill="#000000" font-weight="700" >hold</text>
<text transform="translate(687.92 864.60) scale(1.0498 1)" font-size="29" fill="#000000" font-weight="700" >and</text>
<text transform="translate(748.82 864.60) scale(1.0769 1)" font-size="29" fill="#000000" font-weight="700" >drag</text>
<text transform="translate(823.80 864.60) scale(1.0870 1)" font-size="29" fill="#000000" font-weight="700" >the</text>
<text transform="translate(878.78 864.60) scale(1.0115 1)" font-size="29" fill="#000000" font-weight="700" >slide</text>
<text transform="translate(574.67 904.40) scale(1.0505 1)" font-size="29" fill="#000000" font-weight="700" >upwards</text>
<text transform="translate(706.17 904.40) scale(1.0259 1)" font-size="29" fill="#000000" font-weight="700" >or</text>
<text transform="translate(744.05 904.40) scale(1.0493 1)" font-size="29" fill="#000000" font-weight="700" >downwards</text>
<text transform="translate(13.09 1007.50) scale(1.0227 1)" font-size="15.2" fill="#4A4846" >Slide 2 of 3</text>
<text transform="translate(164.86 1007.50) scale(1.0300 1)" font-size="15.2" fill="#4A4846" >English (Nigeria)</text>
<text transform="translate(329.50 1007.50) scale(1.0050 1)" font-size="15.2" fill="#4A4846" >Accessibility: Investigate</text>
<text transform="translate(896.66 1007.50) scale(1.0340 1)" font-size="15.2" fill="#4A4846" >Notes</text>
<text transform="translate(991.47 1007.50) scale(1.0403 1)" font-size="15.2" fill="#4A4846" >Comments</text>
<text transform="translate(1549.50 1007.50) scale(1.0032 1)" font-size="15.2" fill="#4A4846" >66%</text>
<rect x="100" y="405" width="186" height="108" fill="#FFFFFF" stroke="#A82A1B" stroke-width="6" shape-rendering="crispEdges"/>
<path d="M538 841.3 L303.5 532.3" stroke="#000" stroke-width="4" fill="none"/>
<path d="M292.2 517.1 L312.4 531.5 L304.6 533.4 L300.2 540.4 Z" fill="#000"/>
<g shape-rendering="crispEdges">
<g fill="#000"><rect x="235" y="481" width="2" height="2"/><rect x="235" y="493" width="2" height="2"/><rect x="238" y="481" width="2" height="2"/><rect x="238" y="493" width="2" height="2"/><rect x="241" y="481" width="2" height="2"/><rect x="241" y="493" width="2" height="2"/><rect x="244" y="481" width="2" height="2"/><rect x="244" y="493" width="2" height="2"/><rect x="247" y="481" width="2" height="2"/><rect x="247" y="493" width="2" height="2"/><rect x="250" y="481" width="2" height="2"/><rect x="250" y="493" width="2" height="2"/><rect x="253" y="481" width="2" height="2"/><rect x="253" y="493" width="2" height="2"/><rect x="235" y="484" width="2" height="2"/><rect x="253" y="484" width="2" height="2"/><rect x="235" y="487" width="2" height="2"/><rect x="253" y="487" width="2" height="2"/><rect x="235" y="490" width="2" height="2"/><rect x="253" y="490" width="2" height="2"/></g>
<path d="M231.5 459.5 V482.5 L236.5 477.5 L238.5 476 L243.5 487.5 L246.5 487 L241.5 474.5 H248.5 Z" fill="#FFFFFF" stroke="#000" stroke-width="1"/>
</g>
</svg>
</body></html>
